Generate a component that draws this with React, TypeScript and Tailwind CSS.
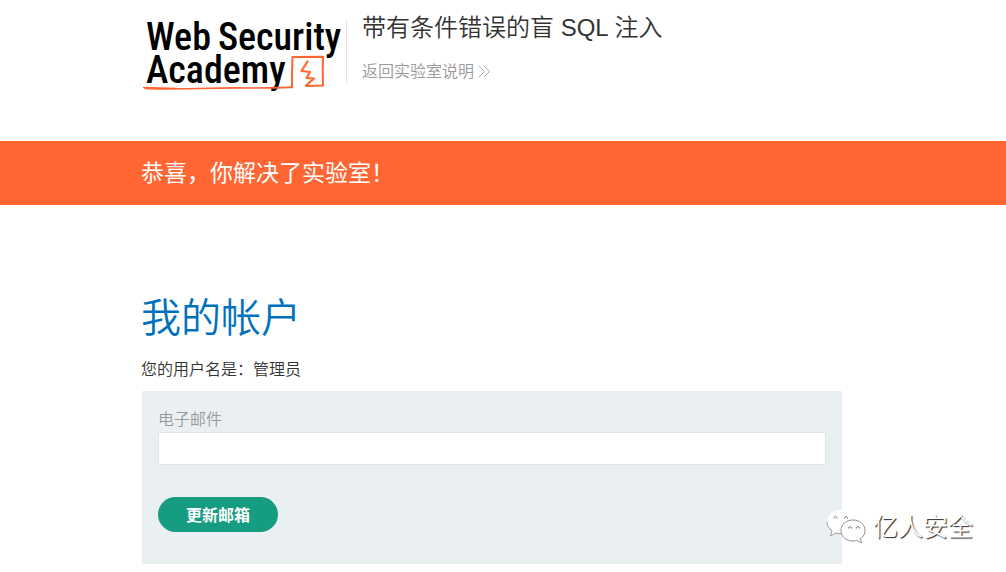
import type { ReactNode } from 'react';

function Container({ children }: { children: ReactNode }) {
  return <div className="pl-[141px] pr-[164px]">{children}</div>;
}

function Logo() {
  return (
    <div className="relative w-[204px] shrink-0 pl-[5px] pt-[9px] font-['Roboto_Condensed','Roboto',sans-serif] text-[38px] font-medium leading-[33px] text-black">
      <div className="flex gap-[7px] whitespace-nowrap">
        <span>Web</span>
        <span>Security</span>
      </div>
      <div>Academy</div>
      <svg
        viewBox="0 0 204 80"
        className="absolute left-0 top-0 h-20 w-[204px]"
        fill="none"
        stroke="#ff6633"
        strokeLinejoin="round"
        strokeLinecap="round"
        aria-hidden="true"
      >
        <path d="M4 76.500 C28 78 70 75.500 104 76 C122 76 138 76.200 151 75.200" strokeWidth="1.700" />
        <path d="M2.500 75.300 L36 76.300" strokeWidth="1.200" />
        <path d="M151 75.500 V62 L151.500 45 L182 44.800 L181.700 60 L182 73.600 L165.500 74" strokeWidth="2" />
        <path d="M166.500 49.500 L160.500 59 L169 60 L165.500 66 L173 66.500 L165 73.500" strokeWidth="2.200" />
      </svg>
    </div>
  );
}

function Header() {
  return (
    <header className="h-[141px]">
      <Container>
        <div className="flex pt-3">
          <a href="#academy" className="flex">
            <Logo />
          </a>
          <div className="ml-px mt-2 h-[63px] w-px shrink-0 bg-[#e4e4e4]" />
          <div className="ml-[15px] whitespace-nowrap">
            <h2 className="text-2xl leading-8 text-[#333332]">带有条件错误的盲 SQL 注入</h2>
            <a href="#description" className="mt-4 flex items-center gap-1 text-base leading-6 text-[#999999]">
              返回实验室说明
              <svg viewBox="0 0 12 12" className="size-3" fill="none" stroke="#aaaaaa" strokeWidth="1" aria-hidden="true">
                <path d="M1 0 6.500 5.500 1 11M6 0 11.500 5.500 6 11" />
              </svg>
            </a>
          </div>
        </div>
      </Container>
    </header>
  );
}

function Watermark() {
  return (
    <div className="absolute bottom-[26px] right-[33px] flex items-center gap-[6px]">
      <svg viewBox="0 0 42 38" className="h-[38px] w-[42px]" strokeLinejoin="round" aria-hidden="true">
        <path d="M15 2C7.500 2 2 7 2 13.500c0 4 2 7 5 9L5.500 28l5.500-3c2 .6 4 .7 6 .5L28 13C27 6 22 2 15 2Z" fill="#fff" />
        <path d="M2 14c.2 4 2 6.500 5 8.500L5.500 28l5.500-3c2 .6 4 .7 6 .5" fill="none" stroke="#888" strokeWidth=".8" />
        <path d="M28 12c7 0 12 4.500 12 10.500 0 3.500-1.500 6-4.500 8l1 4.500-4.500-2.500c-1.500.5-2.500.5-4 .5-7 0-12-4.500-12-10.500S21 12 28 12Z" fill="#fff" stroke="#777" strokeWidth=".8" />
        <path d="M9 10.500v-1q1.500-2.500 3 0v1M19.500 10.500v-1q1.500-2.500 3 0v1M23.500 20.500v-1q1.500-2 3 0v1M31.500 20.500v-1q1.500-2 3 0v1" fill="none" stroke="#777" strokeWidth="1" />
      </svg>
      <span className="text-[25px] leading-8 text-white [text-shadow:1px_1px_1px_#222]">亿人安全</span>
    </div>
  );
}

export default function App() {
  return (
    <div className="relative min-h-screen bg-white font-['Liberation_Sans','Noto_Sans_CJK_SC',sans-serif] font-[350] text-[#333332]">
      <Header />
      <section className="bg-[#ff6633] py-4 text-[23px] font-normal leading-8 text-white">
        <Container>
          <p>恭喜，你解决了实验室！</p>
        </Container>
      </section>
      <main className="pt-[85px]">
        <Container>
          <h1 className="text-[40px] leading-[56px] text-[#0071bd]">我的帐户</h1>
          <p className="mt-3 text-base leading-6">您的用户名是：管理员</p>
          <form className="ml-px mt-[9px] bg-[#eaeff2] px-4 pb-8 pt-4" onSubmit={(e) => e.preventDefault()}>
            <label htmlFor="email" className="block text-base leading-[25px] text-[#999999]">
              电子邮件
            </label>
            <input
              id="email"
              type="email"
              className="block h-[33px] w-full border border-[#e4e4e4] bg-white px-2 text-[#333332] outline-none"
            />
            <button type="submit" className="mt-8 block h-[35px] w-[120px] rounded-full bg-[#169c80] pt-0.5 text-base font-bold text-white">
              更新邮箱
            </button>
          </form>
        </Container>
      </main>
      <Watermark />
    </div>
  );
}
